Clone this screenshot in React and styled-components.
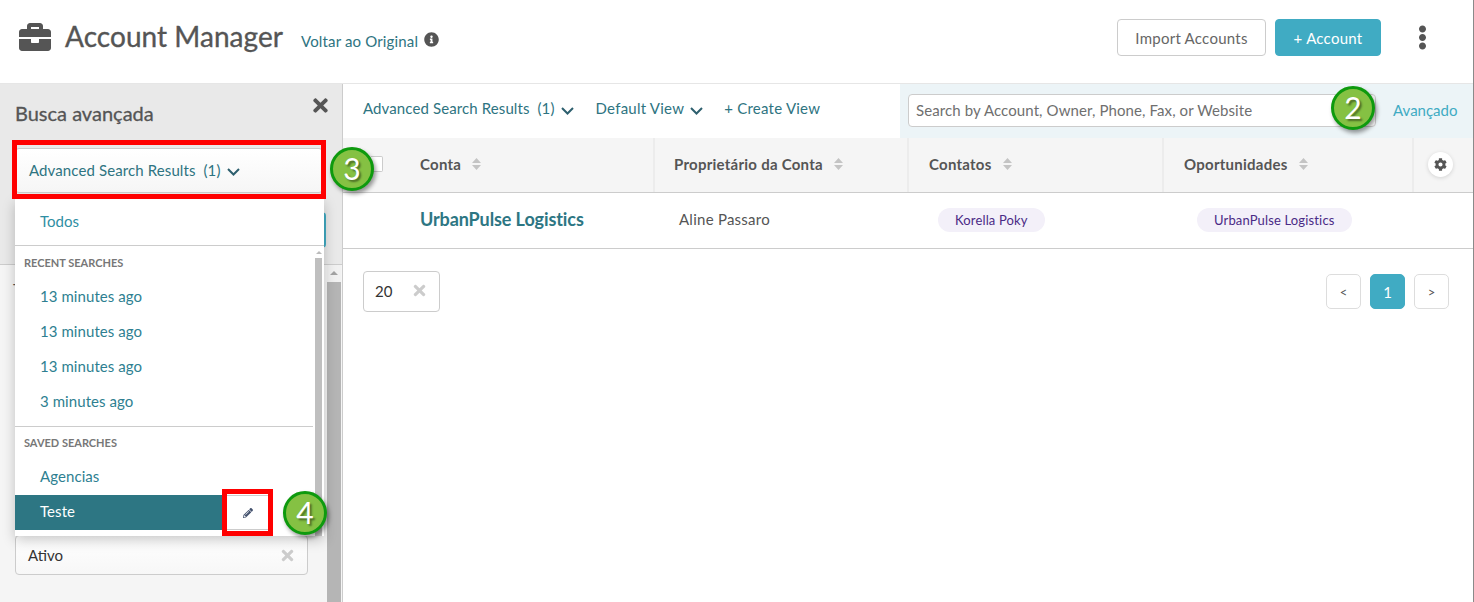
import React from 'react';
import styled, { createGlobalStyle } from 'styled-components';
import { FaBriefcase, FaInfoCircle, FaTimes, FaPencilAlt, FaCog, FaEllipsisV } from 'react-icons/fa';

const Global = createGlobalStyle`
  html, body { margin: 0; padding: 0; background: #fff; }
  body { font-family: Lato, "Open Sans", sans-serif; color: #555; overflow: hidden; }
  * { box-sizing: border-box; }
`;

const Page = styled.div`
  position: relative;
  width: 1474px;
  height: 602px;
  overflow: hidden;
  border-right: 1px solid #8a8a8a;
`;

const Header = styled.header`
  height: 84px;
  border-bottom: 1px solid #e6e6e6;
  display: flex;
  align-items: center;
  padding: 0 38px 10px 19px;
`;

const Title = styled.h1`
  margin: 0 0 2px 14px;
  font-size: 28px;
  letter-spacing: 0.05px;
  font-weight: 400;
  color: #555;
  -webkit-text-stroke: 0.35px #555;
  line-height: 36px;
`;

const BackLink = styled.span`
  margin: 9px 6px 0 18px;
  font-size: 15px;
  letter-spacing: 0.15px;
  color: #2e7481;
`;

const HeaderActions = styled.div`
  margin: 2px 0 0 auto;
  display: flex;
  align-items: center;
  gap: 9px;
`;

const Button = styled.button`
  height: 37px;
  width: ${p => p.$width}px;
  border-radius: 4px;
  font: 400 15px Lato, sans-serif;
  letter-spacing: 0.25px;
  color: ${p => (p.$primary ? '#fff' : '#666')};
  background: ${p => (p.$primary ? '#40abc3' : '#fff')};
  border: 1px solid ${p => (p.$primary ? '#40abc3' : '#ccc')};
  padding: 0;
`;

const MoreButton = styled.span`
  display: flex;
  margin-left: 20px;
  color: #555;
`;

const Body = styled.div`
  display: flex;
  height: 518px;
`;

const Sidebar = styled.aside`
  position: relative;
  width: 343px;
  flex: none;
  border-right: 1px solid #ccc;
  background: #f5f5f5;
  display: flex;
  flex-direction: column;
`;

const SidebarTop = styled.div`
  height: 181px;
  flex: none;
  background: #e9e9e9;
  border-bottom: 1px solid #ccc;
  padding: 18px 0 0 15px;
  position: relative;
`;

const SidebarTitleRow = styled.div`
  display: flex;
  justify-content: space-between;
  align-items: flex-start;
  padding-right: 11px;
  height: 46px;
`;

const SidebarTitle = styled.h2`
  margin: 0;
  font-size: 20px;
  line-height: 22px;
  font-weight: 400;
  -webkit-text-stroke: 0.3px #555;
  color: #555;
`;

const CloseIcon = styled.span`
  display: flex;
  margin-top: -7px;
  color: #555;
`;

const SelectButton = styled.div`
  width: 308px;
  height: 45px;
  background: linear-gradient(#fff, #f6f6f6);
  border: 1px solid #ccc;
  border-radius: 4px;
  padding: 0 13px 2px;
  display: flex;
  align-items: center;
  gap: 6px;
  font-size: 15px;
  letter-spacing: 0.11px;
  color: #2e7481;
`;

const ApplyButton = styled.div`
  margin-top: 19px;
  width: 311px;
  height: 36px;
  background: #fff;
  border: 1px solid #ccc;
  border-right: 2px solid #40abc3;
  border-radius: 4px;
`;

const SidebarScroll = styled.div`
  flex: 1;
  display: flex;
  min-height: 0;
`;

const SidebarForm = styled.div`
  flex: 1;
  padding: 15px 19px 0 13px;
  display: flex;
  flex-direction: column;
`;

const FieldLabel = styled.div`
  font-size: 15px;
  color: #555;
  height: 255px;
`;

const FieldSelect = styled.div`
  height: 40px;
  margin-left: 2px;
  background: linear-gradient(#fff, #f7f7f7);
  border: 1px solid #ccc;
  border-radius: 4px;
  padding: 0 11px 0 12px;
  display: flex;
  align-items: center;
  justify-content: space-between;
  font-size: 15px;
  color: #333;
`;

const ClearIcon = styled(FaTimes)`
  color: #ccc;
  font-size: 17px;
`;

const ScrollTrack = styled.div`
  width: 14px;
  margin-right: 1px;
  flex: none;
  display: flex;
  flex-direction: column;
  align-items: center;
  padding-top: 6px;
  background: #f1f1f1;
`;

const ScrollArrow = styled.span`
  width: 0;
  height: 0;
  border-left: 4px solid transparent;
  border-right: 4px solid transparent;
  border-bottom: 4px solid #a3a3a3;
`;

const ScrollThumb = styled.div`
  width: 100%;
  flex: 1;
  margin-top: 7px;
  background: #b5b5b5;
`;

const Dropdown = styled.div`
  position: absolute;
  left: 15px;
  top: 115px;
  width: 309px;
  height: 337px;
  background: #fff;
  box-shadow: 0 4px 12px rgba(0, 0, 0, 0.22);
  display: flex;
  flex-direction: column;
  z-index: 2;
`;

const DropdownTop = styled.div`
  height: 47px;
  flex: none;
  border-bottom: 1px solid #ccc;
  display: flex;
  align-items: center;
  padding: 0 25px 2px;
  font-size: 15px;
  color: #2f8ea3;
`;

const DropdownScroll = styled.div`
  flex: 1;
  display: flex;
  min-height: 0;
`;

const DropdownList = styled.div`
  flex: 1;
  min-width: 0;
`;

const DropdownTrack = styled.div`
  width: 7px;
  margin: 0 2px;
  flex: none;
  display: flex;
  flex-direction: column;
  align-items: center;
  padding-top: 5px;
`;

const DropdownArrow = styled.span`
  width: 0;
  height: 0;
  border-left: 3px solid transparent;
  border-right: 3px solid transparent;
  border-bottom: 3px solid #bbb;
`;

const DropdownThumb = styled.div`
  width: 100%;
  flex: 1;
  margin-top: 4px;
  background: #bfbfbf;
`;

const GroupLabel = styled.div`
  height: ${p => p.$height}px;
  padding: ${p => p.$top}px 9px 0;
  font-size: 11px;
  line-height: 14px;
  font-weight: 700;
  color: #777;
  text-transform: uppercase;
`;

const GroupDivider = styled.div`
  height: 1px;
  margin-top: 8px;
  background: #ccc;
`;

const Item = styled.div`
  height: 35px;
  display: flex;
  align-items: center;
  padding: 0 0 ${p => (p.$raised ? 3 : 0)}px 25px;
  font-size: 15px;
  letter-spacing: 0.07px;
  color: ${p => (p.$active ? '#fff' : '#2e7f91')};
  background: ${p => (p.$active ? '#2d7683' : 'transparent')};
  ${p => p.$active && 'width: 212px; flex: none;'}
`;

const EditRow = styled.div`
  display: flex;
`;

const EditButton = styled.span`
  width: 41px;
  height: 35px;
  background: #fff;
  border-top: 1px solid #ccc;
  border-bottom: 1px solid #ccc;
  display: flex;
  align-items: center;
  justify-content: center;
  color: #44526e;
  font-size: 10px;
`;

const Main = styled.main`
  flex: 1;
  min-width: 0;
  display: flex;
  flex-direction: column;
`;

const Toolbar = styled.div`
  height: 54px;
  flex: none;
  display: flex;
`;

const ViewTabs = styled.div`
  width: 557px;
  flex: none;
  display: flex;
  align-items: center;
  padding: 0 0 6px 20px;
  font-size: 15px;
  color: #2e7481;
`;

const ViewTab = styled.span`
  display: flex;
  align-items: center;
  gap: 6px;
  margin-right: ${p => p.$gap}px;
  letter-spacing: ${p => p.$spacing}px;
  white-space: nowrap;
`;

const SearchArea = styled.div`
  flex: 1;
  background: #ecf4f7;
  display: flex;
  align-items: center;
  padding: 0 15px 2px 8px;
  gap: 17px;
`;

const SearchBox = styled.div`
  width: 468px;
  height: 33px;
  background: #fff;
  border: 1px solid #ccc;
  border-radius: 4px;
  padding: 0 7px;
  display: flex;
  align-items: center;
  font-size: 15px;
  letter-spacing: 0.1px;
  color: #6f6f6f;
  white-space: nowrap;
`;

const AdvancedLink = styled.span`
  font-size: 15px;
  color: #40abc3;
`;

const Row = styled.div`
  display: grid;
  grid-template-columns: 312px 254px 255px 250px 1fr;
  border-bottom: 1px solid #ccc;
`;

const HeadRow = styled(Row)`
  height: 55px;
  background: #f5f5f5;
`;

const BodyRow = styled(Row)`
  height: 56px;
`;

const HeadCell = styled.div`
  display: flex;
  align-items: center;
  gap: 11px;
  padding-left: ${p => p.$pad}px;
  padding-bottom: 2px;
  font-size: 15px;
  font-weight: 700;
  letter-spacing: 0.25px;
  color: #555;
  border-right: ${p => (p.$plain ? '0' : '2px solid #ececec')};
  ${p => p.$center && 'justify-content: center; padding: 0 6px 2px 0;'}
`;

const Checkbox = styled.span`
  width: 12px;
  height: 16px;
  border: 1px solid #ccc;
  border-left: 0;
  background: #fff;
  border-radius: 0 2px 2px 0;
  margin-right: 26px;
  flex: none;
`;

const SortIcon = () => (
  <svg width="9" height="12" viewBox="0 0 9 12" fill="#c4c4c4">
    <path d="M4.5 0 9 5H0zM0 7h9l-4.5 5z" />
  </svg>
);

const GearButton = styled.span`
  width: 25px;
  height: 25px;
  border-radius: 50%;
  background: #fff;
  box-shadow: 0 1px 4px rgba(0, 0, 0, 0.14);
  display: flex;
  align-items: center;
  justify-content: center;
  color: #555;
  font-size: 13px;
`;

const Cell = styled.div`
  display: flex;
  align-items: center;
  padding-left: ${p => p.$pad}px;
  padding-bottom: 3px;
  font-size: 15px;
  letter-spacing: 0.25px;
  color: #555;
`;

const AccountName = styled.span`
  font-size: 18px;
  font-weight: 700;
  letter-spacing: -0.1px;
  color: #2d7683;
`;

const Tag = styled.span`
  height: 24px;
  margin-top: 2px;
  padding: 0 17px;
  border-radius: 12px;
  background: #f3f0f9;
  color: #4a2a86;
  font-size: 13px;
  letter-spacing: 0.15px;
  line-height: 24px;
`;

const Footer = styled.div`
  display: flex;
  justify-content: space-between;
  align-items: center;
  padding: 22px 24px 0 20px;
`;

const PageSize = styled.div`
  width: 77px;
  height: 41px;
  border: 1px solid #ccc;
  border-radius: 4px;
  padding: 0 11px 2px 11px;
  display: flex;
  align-items: center;
  justify-content: space-between;
  font-size: 15px;
  color: #333;
`;

const Pager = styled.div`
  display: flex;
  gap: 9px;
`;

const PageButton = styled.span`
  width: 35px;
  height: 35px;
  border-radius: 5px;
  border: 1px solid ${p => (p.$active ? '#40abc3' : '#ddd')};
  background: ${p => (p.$active ? '#40abc3' : '#fff')};
  color: ${p => (p.$active ? '#fff' : '#555')};
  font-size: ${p => (p.$active ? 15 : 13)}px;
  display: flex;
  align-items: center;
  justify-content: center;
`;

const Callout = styled.span`
  position: absolute;
  left: ${p => p.$x}px;
  top: ${p => p.$y}px;
  width: 44px;
  height: 44px;
  border-radius: 50%;
  background: #85c143;
  border: 3px solid #0e9a0e;
  box-shadow: 2px 3px 4px rgba(0, 0, 0, 0.4);
  color: #fff;
  font: 400 30px/36px Lato, sans-serif;
  text-align: center;
  text-shadow: 2px 2px 2px rgba(0, 0, 0, 0.45);
  z-index: 4;
`;

const RedBox = styled.span`
  position: absolute;
  left: ${p => p.$x}px;
  top: ${p => p.$y}px;
  width: ${p => p.$w}px;
  height: ${p => p.$h}px;
  border: 5px solid #f00;
  z-index: 3;
`;

const Chevron = () => (
  <svg width="13" height="8" viewBox="0 0 13 8" fill="none" stroke="#2d5f6e" strokeWidth="2" style={{ marginTop: 5 }}>
    <path d="M1 1l5.5 5.5L12 1" />
  </svg>
);

const columns = [
  { name: 'Proprietário da Conta', pad: 19 },
  { name: 'Contatos', pad: 20 },
  { name: 'Oportunidades', pad: 20 },
];

export default function App() {
  return (
    <Page>
      <Global />
      <Header>
        <FaBriefcase size={32} color="#555" />
        <Title>Account Manager</Title>
        <BackLink>Voltar ao Original</BackLink>
        <FaInfoCircle size={15} color="#555" style={{ marginTop: 5 }} />
        <HeaderActions>
          <Button $width={149}>Import Accounts</Button>
          <Button $width={106} $primary>+ Account</Button>
          <MoreButton><FaEllipsisV size={25} /></MoreButton>
        </HeaderActions>
      </Header>
      <Body>
        <Sidebar>
          <SidebarTop>
            <SidebarTitleRow>
              <SidebarTitle>Busca avançada</SidebarTitle>
              <CloseIcon><FaTimes size={21} /></CloseIcon>
            </SidebarTitleRow>
            <SelectButton>
              Advanced Search Results&nbsp;&nbsp;(1) <Chevron />
            </SelectButton>
            <ApplyButton />
          </SidebarTop>
          <SidebarScroll>
            <SidebarForm>
              <FieldLabel>Tipo</FieldLabel>
              <FieldSelect>Ativo <ClearIcon /></FieldSelect>
            </SidebarForm>
            <ScrollTrack>
              <ScrollArrow />
              <ScrollThumb />
            </ScrollTrack>
          </SidebarScroll>
          <Dropdown>
            <DropdownTop>Todos</DropdownTop>
            <DropdownScroll>
              <DropdownList>
                <GroupLabel $height={32} $top={10}>Recent Searches</GroupLabel>
                <Item>13 minutes ago</Item>
                <Item>13 minutes ago</Item>
                <Item>13 minutes ago</Item>
                <Item>3 minutes ago</Item>
                <GroupDivider />
                <GroupLabel $height={33} $top={9}>Saved Searches</GroupLabel>
                <Item $raised>Agencias</Item>
                <EditRow>
                  <Item $active $raised>Teste</Item>
                  <EditButton><FaPencilAlt /></EditButton>
                </EditRow>
              </DropdownList>
              <DropdownTrack>
                <DropdownArrow />
                <DropdownThumb />
              </DropdownTrack>
            </DropdownScroll>
          </Dropdown>
        </Sidebar>
        <Main>
          <Toolbar>
            <ViewTabs>
              <ViewTab $gap={22} $spacing={0.11}>Advanced Search Results&nbsp;&nbsp;(1) <Chevron /></ViewTab>
              <ViewTab $gap={21} $spacing={0.24}>Default View <Chevron /></ViewTab>
              <ViewTab $spacing={0.24}>+ Create View</ViewTab>
            </ViewTabs>
            <SearchArea>
              <SearchBox>Search by Account, Owner, Phone, Fax, or Website</SearchBox>
              <AdvancedLink>Avançado</AdvancedLink>
            </SearchArea>
          </Toolbar>
          <HeadRow>
            <HeadCell $pad={28}><Checkbox />Conta <SortIcon /></HeadCell>
            {columns.map(c => (
              <HeadCell key={c.name} $pad={c.pad}>{c.name} <SortIcon /></HeadCell>
            ))}
            <HeadCell $plain $center><GearButton><FaCog /></GearButton></HeadCell>
          </HeadRow>
          <BodyRow>
            <Cell $pad={77}><AccountName>UrbanPulse Logistics</AccountName></Cell>
            <Cell $pad={24}>Aline Passaro</Cell>
            <Cell $pad={29}><Tag>Korella Poky</Tag></Cell>
            <Cell $pad={33}><Tag>UrbanPulse Logistics</Tag></Cell>
            <Cell />
          </BodyRow>
          <Footer>
            <PageSize>20 <ClearIcon /></PageSize>
            <Pager>
              <PageButton>&lt;</PageButton>
              <PageButton $active>1</PageButton>
              <PageButton>&gt;</PageButton>
            </Pager>
          </Footer>
        </Main>
      </Body>
      <RedBox $x={12} $y={140} $w={314} $h={59} />
      <RedBox $x={222} $y={489} $w={51} $h={47} />
      <Callout $x={1331} $y={86}>2</Callout>
      <Callout $x={330} $y={147}>3</Callout>
      <Callout $x={283} $y={491}>4</Callout>
    </Page>
  );
}
